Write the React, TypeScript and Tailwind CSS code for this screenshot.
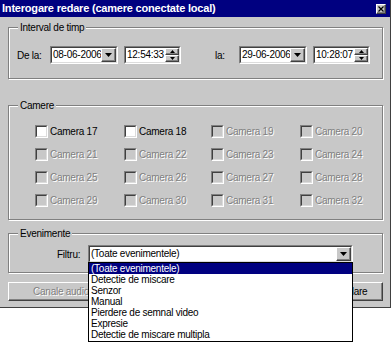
import { ReactNode } from "react";

const font = "font-['Liberation_Sans',Arial,sans-serif]";
const sunkenOuter = "border border-t-[#808080] border-l-[#808080] border-b-white border-r-white";
const sunkenInner = "border border-t-[#404040] border-l-[#404040] border-b-[#dcdcdc] border-r-[#dcdcdc]";
const raised = "border border-t-white border-l-white border-b-[#404040] border-r-[#404040] shadow-[inset_-1px_-1px_0_#808080]";
const disabledText = "text-[#808080] [text-shadow:1px_1px_0_#fff]";

function DownArrow() {
  return (
    <svg width="7" height="4" viewBox="0 0 7 4">
      <path d="M0 0h7L3.5 4z" fill="#000" />
    </svg>
  );
}

function Group({ label, className, children }: { label: string; className: string; children?: ReactNode }) {
  return (
    <div className={`relative w-[375px] border border-[#808080] shadow-[inset_1px_1px_0_#fff,1px_1px_0_#fff] ${className}`}>
      <span className="absolute -top-[6px] left-[9px] px-[2px] bg-[#c8c8c8] leading-[11px]">{label}</span>
      {children}
    </div>
  );
}

function DateBox({ value }: { value: string }) {
  return (
    <div className={`${sunkenOuter} w-[68px] h-[18px] bg-white`}>
      <div className={`${sunkenInner} h-full flex items-center`}>
        <span className="flex-1 pl-[1px] leading-none whitespace-nowrap overflow-hidden">{value}</span>
        <div className={`${raised} w-[15px] h-full shrink-0 bg-[#c8c8c8] flex items-center justify-center`}>
          <DownArrow />
        </div>
      </div>
    </div>
  );
}

function TimeBox({ value }: { value: string }) {
  return (
    <div className={`${sunkenOuter} w-[57px] h-[18px] bg-white`}>
      <div className={`${sunkenInner} h-full flex items-center`}>
        <span className="flex-1 pl-[1px] leading-none whitespace-nowrap">{value}</span>
        <div className="w-[14px] h-full shrink-0 flex flex-col">
          <div className={`${raised} flex-1 bg-[#c8c8c8] flex items-center justify-center`}>
            <svg width="5" height="3" viewBox="0 0 5 3">
              <path d="M2.5 0L5 3H0z" fill="#000" />
            </svg>
          </div>
          <div className={`${raised} flex-1 bg-[#c8c8c8] flex items-center justify-center`}>
            <svg width="5" height="3" viewBox="0 0 5 3">
              <path d="M0 0h5L2.5 3z" fill="#000" />
            </svg>
          </div>
        </div>
      </div>
    </div>
  );
}

function CameraBox({ n, enabled }: { n: number; enabled: boolean }) {
  return (
    <div className="h-[23px] flex items-center">
      <div className={`${sunkenOuter} w-[13px] h-[13px] shrink-0`}>
        <div className={`${sunkenInner} w-full h-full ${enabled ? "bg-white" : "bg-[#c8c8c8]"}`} />
      </div>
      <span className={`ml-[2px] leading-none whitespace-nowrap ${enabled ? "" : disabledText}`}>Camera {n}</span>
    </div>
  );
}

const events = [
  "(Toate evenimentele)",
  "Detectie de miscare",
  "Senzor",
  "Manual",
  "Pierdere de semnal video",
  "Expresie",
  "Detectie de miscare multipla",
];

export default function App() {
  const cameras = Array.from({ length: 16 }, (_, i) => 17 + i);

  return (
    <div className={`relative w-[392px] h-[342px] overflow-hidden bg-white text-[10px] tracking-[-0.25px] text-black ${font}`}>
      <div className="w-[391px] h-[308px] bg-[#c8c8c8] border-r border-b border-[#404040] flex flex-col">
        {/* title bar */}
        <div className="h-[17px] bg-[#000080] flex items-center justify-between pl-[2px] pr-[4px]">
          <span className="text-white font-bold text-[11px] tracking-[-0.2px] leading-none">
            Interogare redare (camere conectate local)
          </span>
          <div className={`${raised} w-[10px] h-[10px] bg-[#c8c8c8] flex items-center justify-center`}>
            <svg width="6" height="6" viewBox="0 0 6 6">
              <path d="M0.5 0.5l5 5M5.5 0.5l-5 5" stroke="#000" strokeWidth="1.2" />
            </svg>
          </div>
        </div>

        <div className="pl-[8px] pt-[10px] flex flex-col">
          <Group label="Interval de timp" className="h-[52px]">
            <div className="flex items-center pl-[8px] pt-[18px]">
              <span className="w-[33px]">De la:</span>
              <DateBox value="08-06-2006" />
              <div className="ml-[6px]">
                <TimeBox value="12:54:33" />
              </div>
              <span className="ml-[34px] w-[24px]">la:</span>
              <DateBox value="29-06-2006" />
              <div className="ml-[6px]">
                <TimeBox value="10:28:07" />
              </div>
            </div>
          </Group>

          <Group label="Camere" className="h-[115px] mt-[26px]">
            <div className="grid grid-cols-[89px_87px_89px_80px] pl-[26px] pt-[14px]">
              {cameras.map((n) => (
                <CameraBox key={n} n={n} enabled={n === 17 || n === 18} />
              ))}
            </div>
          </Group>

          <Group label="Evenimente" className="h-[40px] mt-[13px]">
            <div className="flex items-center pl-[48px] pt-[11px]">
              <span className="w-[31px]">Filtru:</span>
              <div className={`${sunkenOuter} w-[265px] h-[18px] bg-white`}>
                <div className={`${sunkenInner} h-full flex items-center`}>
                  <span className="flex-1 pl-[1px] leading-none">(Toate evenimentele)</span>
                  <div className={`${raised} w-[15px] h-full bg-[#c8c8c8] flex items-center justify-center`}>
                    <DownArrow />
                  </div>
                </div>
              </div>
            </div>
          </Group>

          <div className="w-[375px] mt-[9px] flex justify-between">
            <div className={`${raised} w-[106px] h-[19px] flex items-center justify-center ${disabledText}`}>
              Canale audio
            </div>
            <div className={`${raised} w-[64px] h-[19px] flex items-center justify-center`}>Anulare</div>
          </div>
        </div>
      </div>

      {/* open dropdown list */}
      <div className="absolute left-[88px] top-[262px] w-[265px] h-[80px] bg-white border border-black">
        {events.map((e, i) => (
          <div
            key={e}
            className={`h-[11px] pl-[2px] leading-[11px] whitespace-nowrap ${i === 0 ? "bg-[#000080] text-white" : ""}`}
          >
            {e}
          </div>
        ))}
      </div>
    </div>
  );
}
